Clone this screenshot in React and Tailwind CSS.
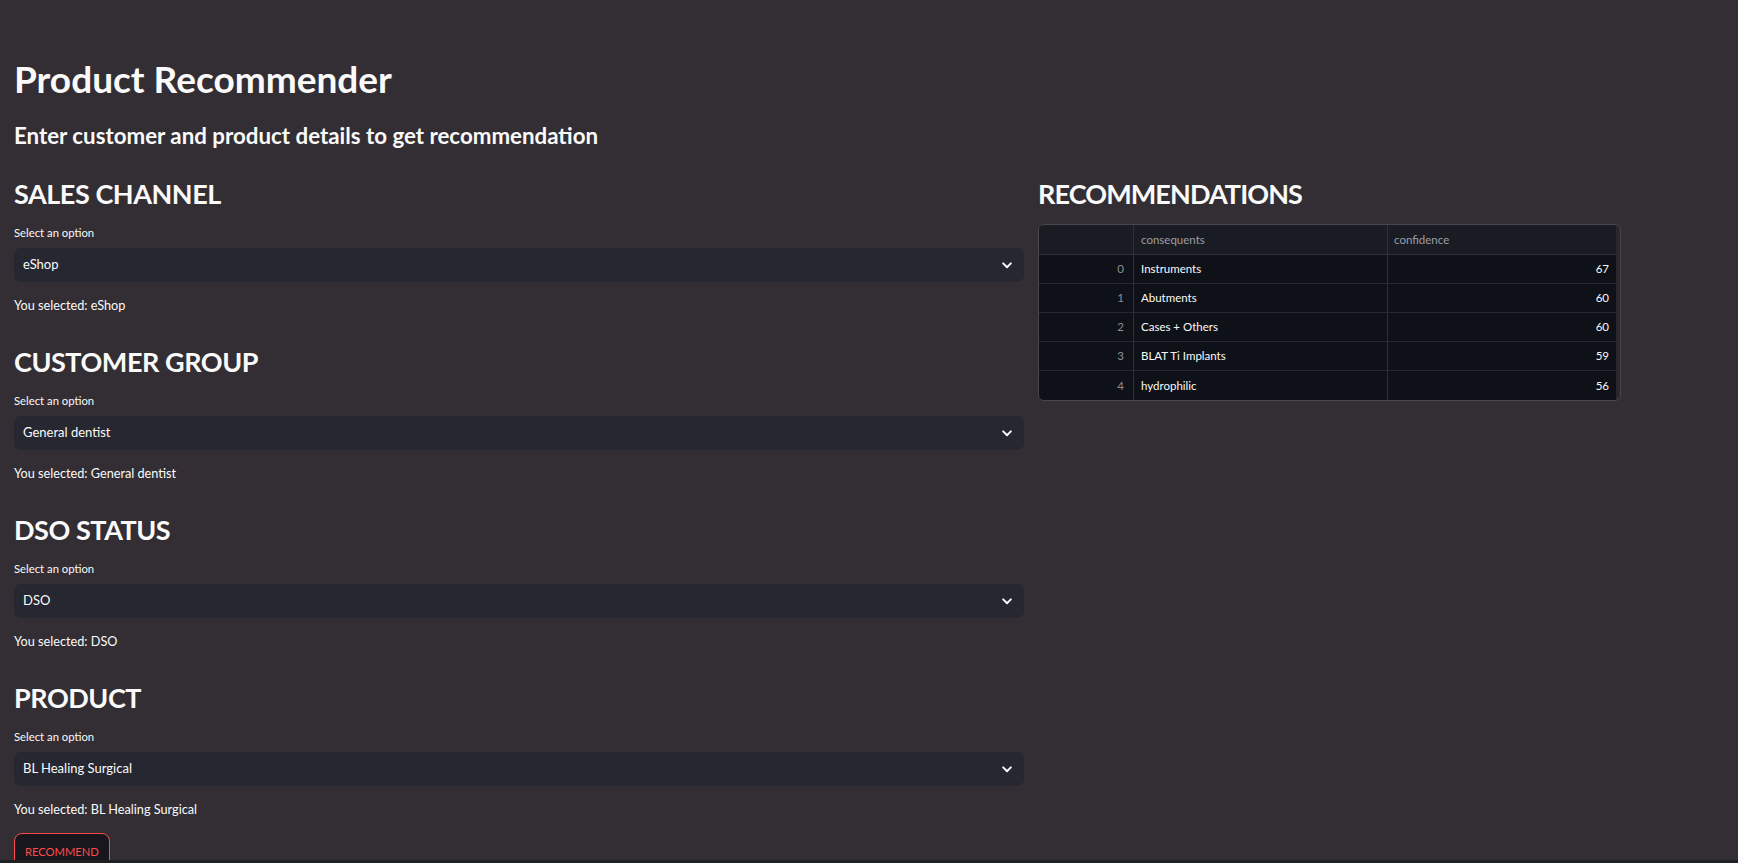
import React from "react";

function Chevron() {
  return (
    <svg width="10" height="7" viewBox="0 0 10 7" fill="none">
      <path d="M1.2 1.4 L5 5.2 L8.8 1.4" stroke="#fafafa" strokeWidth="2" strokeLinecap="round" strokeLinejoin="round" />
    </svg>
  );
}

function Section({ title, value, first }) {
  return (
    <div className={first ? "" : "mt-[28px]"}>
      <h2 className="text-[27px] leading-[38px] font-bold tracking-[-0.45px] text-[#fafafa]">{title}</h2>
      <div className="mt-[12px] text-[11.3px] leading-[16px] text-[#fafafa]">Select an option</div>
      <div className="mt-[7px] h-[34px] rounded-[7px] bg-[#262730] flex items-center justify-between pl-[9px] pr-[12px]">
        <span className="text-[13px] text-[#fafafa]">{value}</span>
        <Chevron />
      </div>
      <div className="mt-[13px] text-[12.7px] leading-[20px] text-[#fafafa]">You selected: {value}</div>
    </div>
  );
}

const rows = [
  ["0", "Instruments", "67"],
  ["1", "Abutments", "60"],
  ["2", "Cases + Others", "60"],
  ["3", "BLAT Ti Implants", "59"],
  ["4", "hydrophilic", "56"],
];

function Table() {
  return (
    <div className="mt-[11px] w-[583px] rounded-[6px] border border-[#4a464c] bg-[#2b282d] overflow-hidden">
      <div className="w-[577px] bg-[#0e1117] text-[11.5px]">
        <div className="grid grid-cols-[95px_254px_228px] h-[30px] bg-[#1a1c24] border-b border-[#2e313a]">
          <div className="border-r border-[#2e313a]"></div>
          <div className="border-r border-[#2e313a] flex items-center pl-[7px] text-[#9c9ea6]">consequents</div>
          <div className="flex items-center pl-[6px] text-[#9c9ea6]">confidence</div>
        </div>
        {rows.map((r, i) => (
          <div
            key={r[0]}
            className={
              "grid grid-cols-[95px_254px_228px] h-[29px] " +
              (i < rows.length - 1 ? "border-b border-[#262932]" : "")
            }
          >
            <div className="border-r border-[#2e313a] flex items-center justify-end pr-[9px] text-[#8d9099]">{r[0]}</div>
            <div className="border-r border-[#2e313a] flex items-center pl-[7px] text-[#fafafa]">{r[1]}</div>
            <div className="flex items-center justify-end pr-[7px] text-[#fafafa]">{r[2]}</div>
          </div>
        ))}
      </div>
    </div>
  );
}

export default function App() {
  return (
    <div className="min-h-screen bg-[#332e33] text-[#fafafa] font-['Lato',sans-serif] px-[14px] pt-[57px] pb-[40px]">
      <h1 className="text-[37px] leading-[44px] font-bold">Product Recommender</h1>
      <p className="mt-[22px] text-[22.3px] leading-[26px] font-bold">Enter customer and product details to get recommendation</p>
      <div className="mt-[26px] grid grid-cols-[1010px_1fr] gap-[14px]">
        <div>
          <Section first title="SALES CHANNEL" value="eShop" />
          <Section title="CUSTOMER GROUP" value="General dentist" />
          <Section title="DSO STATUS" value="DSO" />
          <Section title="PRODUCT" value="BL Healing Surgical" />
          <button className="mt-[14px] h-[38px] px-[10px] rounded-[8px] border border-[#ff4b4b] bg-[#17171d] text-[#ff4b4b] text-[11.2px] leading-[16px]">
            RECOMMEND
          </button>
        </div>
        <div>
          <h2 className="text-[27px] leading-[38px] font-bold tracking-[-0.9px] text-[#fafafa]">RECOMMENDATIONS</h2>
          <Table />
        </div>
      </div>
      <div className="fixed bottom-0 left-0 right-0 h-[3px] bg-[#1f2021]"></div>
    </div>
  );
}
